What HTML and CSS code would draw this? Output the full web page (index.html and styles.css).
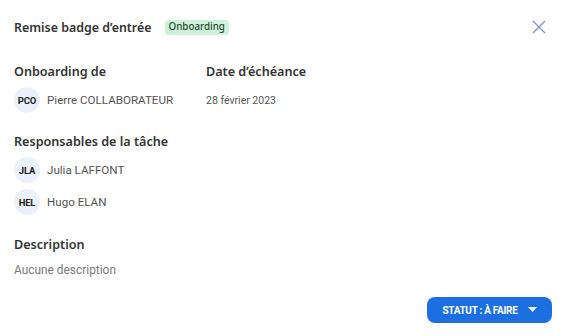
FILE: index.html
```html
<!DOCTYPE html>
<html lang="fr">
  <head>
    <meta charset="UTF-8" />
    <meta name="viewport" content="width=device-width, initial-scale=1.0" />
    <title>Remise badge d'entrée</title>
    <link rel="stylesheet" href="styles.css">
  </head>
  <body>
    <div class="task-modal">
      <!-- Header -->
      <div class="task-header">
        <h1 class="task-title">Remise badge d’entrée</h1>
        <span class="tag">Onboarding</span>
        <button class="close-btn" aria-label="Fermer">
          <svg width="14" height="14" viewBox="0 0 14 14">
            <path d="M1 1 L13 13 M13 1 L1 13" stroke="#7d93c8" stroke-width="1.4" fill="none" />
          </svg>
        </button>
      </div>

      <div class="info-row">
        <div class="info-col first">
          <h2>Onboarding de</h2>
          <div class="person">
            <span class="avatar">PCO</span>
            <span class="person-name">Pierre COLLABORATEUR</span>
          </div>
        </div>
        <div class="info-col">
          <h2>Date d’échéance</h2>
          <p class="value">28 février 2023</p>
        </div>
      </div>

      <div class="section">
        <h2>Responsables de la tâche</h2>
        <div class="person">
          <span class="avatar">JLA</span>
          <span class="person-name">Julia LAFFONT</span>
        </div>
        <div class="person">
          <span class="avatar">HEL</span>
          <span class="person-name">Hugo ELAN</span>
        </div>
      </div>

      <div class="section desc">
        <h2>Description</h2>
        <p class="empty">Aucune description</p>
      </div>

      <div class="task-footer">
        <button class="status-btn">
          STATUT : À FAIRE
          <svg width="9" height="6" viewBox="0 0 9 6"><path d="M0 0 H9 L4.5 5 Z" fill="#fff" /></svg>
        </button>
      </div>
    </div>
  </body>
</html>
```

FILE: styles.css
```css
/* Reset */
* {
  margin: 0;
  padding: 0;
  box-sizing: border-box;
}

body {
  background-color: #ffffff;
  color: #333;
  font-family: Roboto, "Liberation Sans", sans-serif;
}

.task-modal {
  width: 565px;
  height: 336px;
  padding: 14px 13px 0 14px;
  display: flex;
  flex-direction: column;
}

h1,
h2 {
  font-family: "Noto Sans", "Open Sans", sans-serif;
  font-weight: 600;
  color: #333;
}

.task-header {
  display: flex;
  align-items: center;
  height: 26px;
}

.task-title {
  font-size: 12.4px;
}

.tag {
  margin-left: 13px;
  padding: 1px 4px 2px;
  background-color: #cef2d9;
  color: #2b4a37;
  border-radius: 4px;
  font-family: "Noto Sans", sans-serif;
  font-size: 9.8px;
  font-weight: 500;
  line-height: 12px;
}

.close-btn {
  margin-left: auto;
  margin-right: 6px;
  background: none;
  border: none;
  display: flex;
  cursor: pointer;
}

h2 {
  font-size: 12.6px;
  line-height: 18px;
}

.info-row {
  display: flex;
  margin-top: 23px;
}

.info-col.first {
  width: 192px;
}

.value {
  font-size: 10.5px;
  color: #555;
  margin-top: 13px;
  line-height: 14px;
}

.person {
  display: flex;
  align-items: center;
  margin-top: 6px;
  height: 26px;
}

.person + .person {
  margin-top: 6px;
}

.avatar {
  width: 26px;
  height: 26px;
  border-radius: 50%;
  background-color: #eaf1fc;
  color: #222;
  display: flex;
  justify-content: center;
  align-items: center;
  font-size: 9.5px;
  font-weight: 700;
  letter-spacing: -0.2px;
  margin-right: 7px;
}

.person-name {
  font-size: 11.6px;
  color: #555;
}

.section {
  margin-top: 20px;
}

.section.desc {
  margin-top: 21px;
}

.empty {
  margin-top: 9px;
  font-size: 11.9px;
  color: #7a7a7a;
}

.task-footer {
  margin-top: auto;
  margin-bottom: 13px;
  display: flex;
  justify-content: flex-end;
}

.status-btn {
  width: 125px;
  height: 26px;
  background-color: #1b6fe0;
  color: #ffffff;
  border: none;
  border-radius: 8px;
  font-family: Roboto, sans-serif;
  font-size: 10px;
  font-weight: 700;
  letter-spacing: -0.3px;
  display: flex;
  align-items: center;
  justify-content: center;
  gap: 10px;
  cursor: pointer;
}
```
